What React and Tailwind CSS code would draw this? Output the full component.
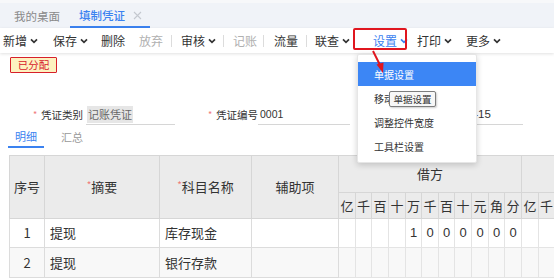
const Chevron = ({ className = '' }) => (
  <svg width="8" height="6" viewBox="0 0 8 6" className={className}>
    <path d="M1 1.3 L4 4.3 L7 1.3" fill="none" stroke="currentColor" strokeWidth="1.7" />
  </svg>
);

const tools = [
  { w: 'w-[50px]', label: '新增', caret: true },
  { w: 'w-[48px]', label: '保存', caret: true },
  { w: 'w-[38px]', label: '删除' },
  { w: 'w-[32px]', label: '放弃', muted: true },
  { w: 'w-[10px]', sep: true },
  { w: 'w-[42px]', label: '审核', caret: true },
  { w: 'w-[10px]', sep: true },
  { w: 'w-[30px]', label: '记账', muted: true },
  { w: 'w-[11px]', sep: true },
  { w: 'w-[32px]', label: '流量' },
  { w: 'w-[9px]', sep: true },
  { w: 'w-[48px]', label: '联查', caret: true },
  { w: 'w-[54px]', label: '设置', caret: true, active: true },
  { w: 'w-[49px]', label: '打印', caret: true },
  { w: 'w-[50px]', label: '更多', caret: true },
];

const units = ['亿', '千', '百', '十', '万', '千', '百', '十', '元', '角', '分'];
const unitW = [17, 16, 17, 17, 16, 17, 16, 17, 17, 16, 17];
const amount = ['', '', '', '', '1', '0', '0', '0', '0', '0', '0'];

const menu = ['单据设置', '移动控件位置', '调整控件宽度', '工具栏设置'];

export default function App() {
  return (
    <div className="relative w-[554px] h-[278px] overflow-hidden bg-white text-[#333] font-['Noto_Sans_CJK_SC','Noto_Sans',sans-serif]">
      {/* page tabs */}
      <div className="h-[28px] bg-[#f0f3f8] border-t-[3px] border-[#f7f8fa] flex items-end pl-[6px] text-[11.5px]">
        <div className="h-[23px] px-[8px] flex items-center text-[#8a8a8a]">我的桌面</div>
        <div className="h-[23px] ml-[2px] pl-[9px] pr-[8px] flex items-center gap-[8px] border-b-2 border-[#3b82f0] text-[#3b82f0] font-medium">
          填制凭证
          <svg width="9" height="9" viewBox="0 0 9 9" className="text-[#c4c8cf]">
            <path d="M1 1 L8 8 M8 1 L1 8" stroke="currentColor" strokeWidth="1.1" />
          </svg>
        </div>
      </div>

      {/* toolbar */}
      <div className="relative z-10 h-[25px] bg-white flex items-center pl-[3px] text-[12px] shadow-[0_1px_3px_rgba(0,0,0,0.12)]">
        {tools.map((t, i) =>
          t.sep ? (
            <div key={i} className={`${t.w} flex items-center`}>
              <span className="w-px h-[12px] bg-[#dcdcdc]" />
            </div>
          ) : (
            <div
              key={i}
              className={`${t.w} flex items-center gap-[3px] ${t.muted ? 'text-[#b0b0b0]' : ''} ${t.active ? 'pl-[10px] text-[#3b82f0]' : ''}`}
            >
              {t.label}
              {t.caret && <Chevron />}
            </div>
          )
        )}
      </div>

      {/* status badge */}
      <div className="mt-[4px] ml-[10px] w-[47px] h-[16px] flex items-center justify-center border-[1.5px] border-[#d7202a] bg-[#fdf2c0] text-[#d7202a] text-[10.5px] rounded-[1px]">
        已分配
      </div>

      {/* voucher header fields */}
      <div className="mt-[32px] h-[20px] flex items-center text-[10.5px]">
        <span className="ml-[33px] w-[8px] text-[#f07a7a] text-[9px]">*</span>
        <span className="w-[45px]">凭证类别</span>
        <div className="w-[89px] h-[20px] flex items-center border-b border-[#d6d6d6]">
          <span className="ml-[1px] px-[1px] bg-[#e6e6e6] text-[#666] text-[11px]">记账凭证</span>
        </div>
        <span className="ml-[33px] w-[8px] text-[#f07a7a] text-[9px]">*</span>
        <span className="w-[42px]">凭证编号</span>
        <div className="w-[92px] h-[20px] flex items-center border-b border-[#d6d6d6] pl-[2px] font-['Liberation_Sans',sans-serif] text-[10.5px]">
          0001
        </div>
        <span className="ml-[25px] w-[8px] text-[#f07a7a] text-[9px]">*</span>
        <span className="w-[45px]">凭证日期</span>
        <div className="w-[95px] h-[20px] flex items-center border-b border-[#d6d6d6] pl-[4px] font-['Liberation_Sans',sans-serif] text-[11.5px]">
          2019-01-15
        </div>
      </div>

      {/* detail / summary tabs */}
      <div className="mt-[2px] h-[21px] flex text-[11px]">
        <div className="ml-[8px] w-[36px] flex items-center justify-center border-b-2 border-[#3b82f0] text-[#3b82f0]">明细</div>
        <div className="ml-[10px] w-[36px] flex items-center justify-center text-[#999]">汇总</div>
      </div>

      {/* entries table */}
      <table className="mt-[7px] ml-[9px] w-[695px] min-w-[695px] table-fixed border-collapse text-[13px] whitespace-nowrap">
        <colgroup>
          <col className="w-[35px]" />
          <col className="w-[115px]" />
          <col className="w-[92px]" />
          <col className="w-[87px]" />
          {unitW.concat(unitW).map((w, i) => (
            <col key={i} style={{ width: w }} />
          ))}
        </colgroup>
        <thead className="bg-[#ebebeb]">
          <tr className="h-[37px]">
            <th rowSpan={2} className="border border-[#d6d6d6] font-normal p-0">序号</th>
            <th rowSpan={2} className="border border-[#d6d6d6] font-normal p-0">
              <span className="text-[#f07a7a] text-[10px] align-top">*</span>摘要
            </th>
            <th rowSpan={2} className="border border-[#d6d6d6] font-normal p-0">
              <span className="text-[#f07a7a] text-[10px] align-top">*</span>科目名称
            </th>
            <th rowSpan={2} className="border border-[#d6d6d6] font-normal p-0">辅助项</th>
            <th colSpan={11} className="border border-[#d6d6d6] font-normal p-0">借方</th>
            <th colSpan={11} className="border border-[#d6d6d6] font-normal p-0">贷方</th>
          </tr>
          <tr className="h-[26px]">
            {units.concat(units).map((u, i) => (
              <th key={i} className="border-x border-b border-[#d6d6d6] font-normal p-0 text-center">{u}</th>
            ))}
          </tr>
        </thead>
        <tbody>
          <tr className="h-[29px] bg-white">
            <td className="border border-[#dcdcdc] text-center p-0">1</td>
            <td className="border border-[#dcdcdc] pl-[5px]">提现</td>
            <td className="border border-[#dcdcdc] pl-[5px]">库存现金</td>
            <td className="border border-[#dcdcdc]" />
            {amount.concat(Array(11).fill('')).map((d, i) => (
              <td key={i} className="border border-[#e4e4e4] text-center p-0 font-['Liberation_Sans',sans-serif]">{d}</td>
            ))}
          </tr>
          <tr className="h-[30px] bg-[#f8f8f8]">
            <td className="border border-[#dcdcdc] text-center p-0">2</td>
            <td className="border border-[#dcdcdc] pl-[5px]">提现</td>
            <td className="border border-[#dcdcdc] pl-[5px]">银行存款</td>
            <td className="border border-[#dcdcdc]" />
            {Array(22).fill('').map((d, i) => (
              <td key={i} className="border border-[#e4e4e4] p-0" />
            ))}
          </tr>
        </tbody>
      </table>

      {/* highlight box around 设置 */}
      <div className="absolute z-20 left-[353px] top-[28px] w-[54px] h-[22px] border-2 border-[#e0161f] rounded-[2px]" />

      {/* settings dropdown */}
      <div className="absolute z-20 left-[357px] top-[54px] w-[120px] h-[109px] py-[7px] bg-white rounded-[2px] border border-[#e6e6e6] shadow-[0_2px_6px_rgba(0,0,0,0.18)] text-[10px]">
        {menu.map((m, i) => (
          <div
            key={m}
            className={`h-[24px] pl-[16px] flex items-center ${i === 0 ? 'bg-[#3c86f5] text-white' : 'text-[#333]'}`}
          >
            {m}
          </div>
        ))}
      </div>

      {/* tooltip */}
      <div className="absolute z-30 left-[389px] top-[91px] w-[47px] h-[16px] flex items-center justify-center border border-[#7d7d7d] bg-[#f7f7f7] rounded-[2px] text-[9.5px] text-[#333] shadow-[1px_1px_2px_rgba(0,0,0,0.2)]">
        单据设置
      </div>

      {/* red pointer arrow */}
      <svg className="absolute z-30 left-[366px] top-[46px]" width="24" height="30" viewBox="0 0 24 30">
        <path d="M7 5 L14 19" stroke="#e0161f" strokeWidth="2" />
        <path d="M10.5 18.5 L17 27 L17.5 16.5 Z" fill="#e0161f" />
      </svg>
    </div>
  );
}
